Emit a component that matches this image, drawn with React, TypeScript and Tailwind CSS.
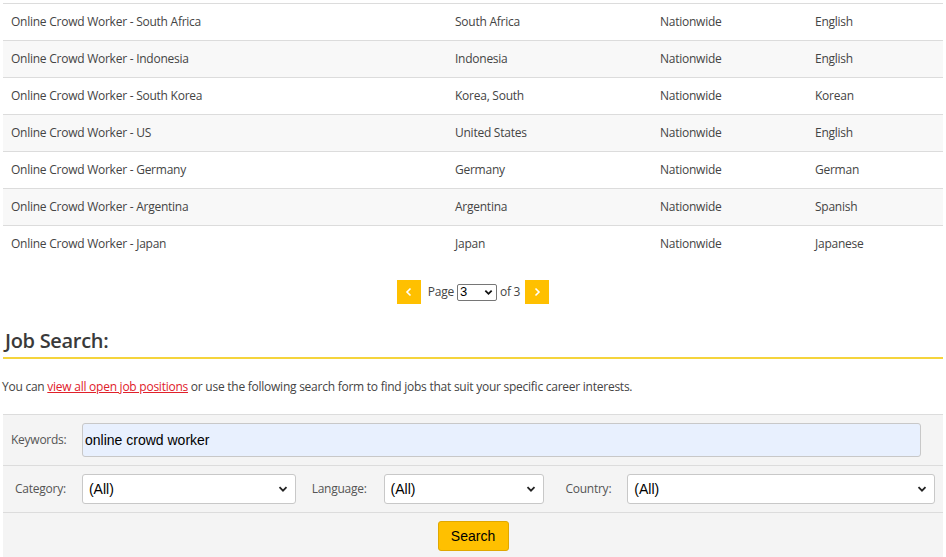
import React from "react";

const rows = [
  ["Online Crowd Worker - South Africa", "South Africa", "Nationwide", "English"],
  ["Online Crowd Worker - Indonesia", "Indonesia", "Nationwide", "English"],
  ["Online Crowd Worker - South Korea", "Korea, South", "Nationwide", "Korean"],
  ["Online Crowd Worker - US", "United States", "Nationwide", "English"],
  ["Online Crowd Worker - Germany", "Germany", "Nationwide", "German"],
  ["Online Crowd Worker - Argentina", "Argentina", "Nationwide", "Spanish"],
  ["Online Crowd Worker - Japan", "Japan", "Nationwide", "Japanese"],
];

function Chevron() {
  return (
    <svg width="10" height="10" viewBox="0 0 10 10" className="pointer-events-none">
      <path d="M1.5 3.2 L5 6.7 L8.5 3.2" fill="none" stroke="#222" strokeWidth="1.8" />
    </svg>
  );
}

function Select({ w, label }: { w: string; label: string }) {
  return (
    <div className={`${w} h-[30px] bg-white border border-[#c8c8c8] rounded-[3px] flex items-center justify-between pl-[6px] pr-[7px] font-['Liberation_Sans',Arial,sans-serif] text-[14px] tracking-normal text-black`}>
      <span>{label}</span>
      <Chevron />
    </div>
  );
}

export default function App() {
  return (
    <div className="w-[946px] h-[557px] overflow-hidden bg-white font-['Open_Sans',sans-serif] text-[#444] tracking-[-0.25px]">
      <div className="pl-[3px] pr-[3px] pt-[3px]">
        <div>
          {rows.map((r, i) => (
            <div
              key={i}
              className={`flex h-[37px] items-center text-[12px] border-t border-[#dcdcdc] ${i % 2 === 1 ? "bg-[#f8f8f8]" : "bg-white"}`}
            >
              <div className="w-[444px] pl-[8px]">{r[0]}</div>
              <div className="w-[205px] pl-[8px]">{r[1]}</div>
              <div className="w-[155px] pl-[8px]">{r[2]}</div>
              <div className="flex-1 pl-[8px]">{r[3]}</div>
            </div>
          ))}
        </div>

        <div className="flex items-center justify-center h-[24px] mt-[18px] text-[12px]">
          <div className="w-[24px] h-[24px] bg-[#ffc000] flex items-center justify-center">
            <svg width="10" height="10" viewBox="0 0 10 10">
              <path d="M6.5 1.5 L3 5 L6.5 8.5" fill="none" stroke="#fff" strokeWidth="1.6" />
            </svg>
          </div>
          <span className="ml-[7px]">Page</span>
          <div className="ml-[3px] w-[40px] h-[17px] border border-[#767676] rounded-[2px] flex items-center justify-between pl-[2px] pr-[3px] font-['Liberation_Sans',Arial,sans-serif] text-[13px] tracking-normal text-black bg-white">
            <span>3</span>
            <svg width="9" height="9" viewBox="0 0 10 10">
              <path d="M1.5 3 L5 6.5 L8.5 3" fill="none" stroke="#111" strokeWidth="2" />
            </svg>
          </div>
          <span className="ml-[3px]">of 3</span>
          <div className="ml-[5px] w-[24px] h-[24px] bg-[#ffc000] flex items-center justify-center">
            <svg width="10" height="10" viewBox="0 0 10 10">
              <path d="M3.5 1.5 L7 5 L3.5 8.5" fill="none" stroke="#fff" strokeWidth="1.6" />
            </svg>
          </div>
        </div>

        <h2 className="mt-[23px] pl-[2px] text-[20px] leading-[28px] font-semibold text-[#3a3a3a] tracking-[-0.3px]">Job Search:</h2>
        <div className="mt-[2px] border-t-2 border-[#f5d43c]"></div>

        <p className="mt-[19px] text-[12px] text-[#444] -ml-[1px]">
          You can{" "}
          <a href="#" className="text-[#e0202a] underline">view all open job positions</a>{" "}
          or use the following search form to find jobs that suit your specific career interests.
        </p>

        <div className="mt-[18px] bg-[#f4f4f4] border-t border-[#dcdcdc]">
          <div className="flex items-center h-[51px] pl-[8px] pr-[22px] border-b border-[#dcdcdc]">
            <span className="w-[71px] text-[12px] text-[#555]">Keywords:</span>
            <div className="flex-1 h-[34px] bg-[#e8f0fe] border border-[#c8c8c8] rounded-[3px] flex items-center pl-[2px] font-['Liberation_Sans',Arial,sans-serif] text-[14px] tracking-normal text-black">
              online crowd worker
            </div>
          </div>
          <div className="flex items-center h-[47px] pl-[12px] pr-[8px] border-b border-[#dcdcdc] text-[12px] text-[#555]">
            <span className="w-[67px]">Category:</span>
            <Select w="w-[214px]" label="(All)" />
            <span className="ml-[16px] w-[72px]">Language:</span>
            <Select w="w-[161px]" label="(All)" />
            <span className="ml-[21px] w-[62px]">Country:</span>
            <Select w="w-[308px]" label="(All)" />
          </div>
          <div className="flex justify-center h-[44px] pt-[8px]">
            <button className="w-[71px] h-[30px] bg-[#ffc000] border border-[#e0a800] rounded-[3px] font-['Liberation_Sans',Arial,sans-serif] text-[14px] tracking-normal text-black">
              Search
            </button>
          </div>
        </div>
      </div>
    </div>
  );
}
